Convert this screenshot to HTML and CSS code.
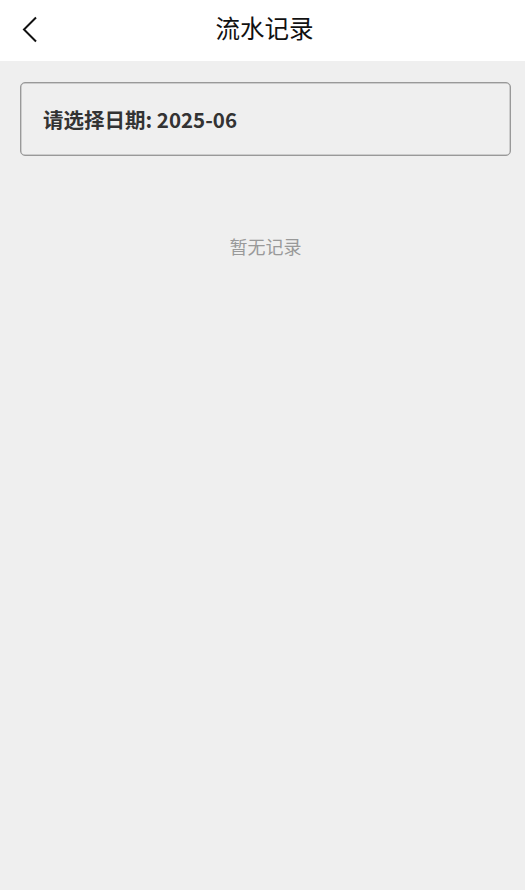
FILE: index.html
```html
<!DOCTYPE html>
<html lang="zh-CN">
<head>
    <meta charset="UTF-8">
    <meta name="viewport" content="width=device-width, initial-scale=1.0">
    <title>流水记录</title>
    <link rel="stylesheet" href="styles.css">
</head>
<body>
    <div class="header">
        <a class="back" href="#">
            <svg width="18" height="28" viewBox="0 0 18 28">
                <polyline points="15,1.5 3,13.5 15,25.5" fill="none" stroke="#111" stroke-width="2"/>
            </svg>
        </a>
        <div class="title">流水记录</div>
    </div>
    <div class="content">
        <div class="date-picker">请选择日期: 2025-06</div>
        <div class="empty">暂无记录</div>
    </div>
</body>
</html>
```

FILE: styles.css
```css
html, body {
    margin: 0;
    padding: 0;
    height: 100%;
}
body {
    background-color: #efefef;
    font-family: "Noto Sans CJK SC", "Noto Sans", sans-serif;
}
.header {
    position: relative;
    height: 61px;
    background-color: #fff;
    display: flex;
    align-items: center;
    justify-content: center;
}
.back {
    position: absolute;
    left: 21px;
    top: 16px;
    display: block;
    line-height: 0;
}
.title {
    font-size: 24.5px;
    color: #111;
    margin-top: -6px;
    margin-left: 4px;
}
.content {
    padding: 21px 14px 0 20px;
}
.date-picker {
    height: 72px;
    border: 1px solid #999;
    border-radius: 5px;
    box-shadow: inset 0 0 0 0.5px #aaa;
    padding: 0 22px;
    display: flex;
    align-items: center;
    font-size: 20.5px;
    font-weight: bold;
    color: #333;
}
.empty {
    margin-top: 77px;
    text-align: center;
    font-size: 18px;
    color: #999;
}
```
